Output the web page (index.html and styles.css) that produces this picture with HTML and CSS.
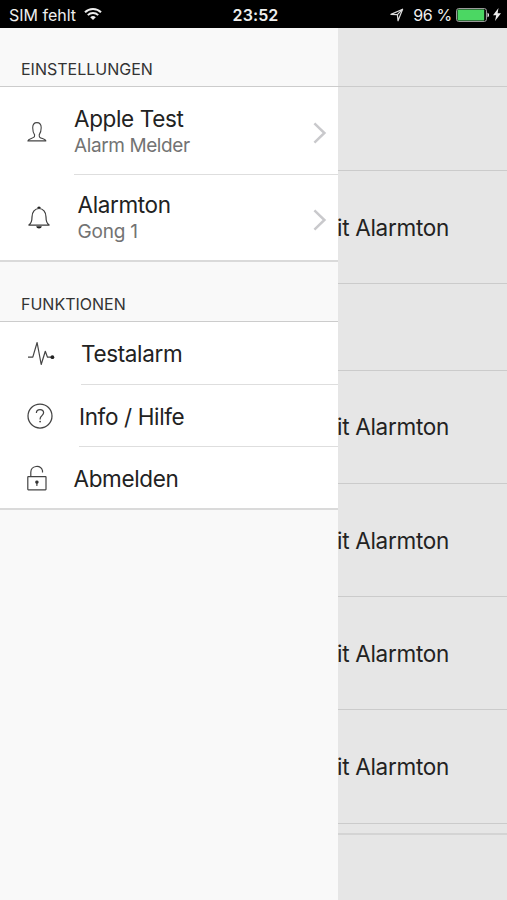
FILE: index.html
```html
<!DOCTYPE html>
<html lang="de">
<head>
<meta charset="utf-8">
<title>Einstellungen</title>
<link rel="stylesheet" href="styles.css">
</head>
<body>
<header class="status">
  <div class="status-left">
    <span class="carrier">SIM fehlt</span>
    <svg class="wifi" width="18" height="14" viewBox="0 0 18 14" fill="none" stroke="#eee" stroke-width="2"><path d="M1 5.2a11.3 11.3 0 0 1 16 0M3.8 8.1a7.4 7.4 0 0 1 10.4 0"/><path d="M9 13 6.2 10.3a4 4 0 0 1 5.6 0Z" fill="#eee" stroke="none"/></svg>
  </div>
  <time class="clock">23:52</time>
  <div class="status-right">
    <svg class="location" width="14" height="14" viewBox="0 0 14 14" fill="none" stroke="#ddd" stroke-width="1.2" stroke-linejoin="round"><path d="M1 6.4 12.6 1.2 8 12.8 7.4 6.6Z"/><path d="M7.4 6.6 12.6 1.2"/></svg>
    <span class="percent">96 %</span>
    <svg class="battery" width="34" height="14" viewBox="0 0 34 14"><rect x=".6" y=".6" width="29.8" height="12.8" rx="2" fill="none" stroke="#aaa" stroke-width="1"/><rect x="1.6" y="1.6" width="26.6" height="10.8" rx=".6" fill="#4bd763"/><path d="M31.5 4.7c2 .6 2 4 0 4.6Z" fill="#eee"/></svg>
    <svg class="bolt" width="8" height="13" viewBox="0 0 8 13"><path d="M5.5 0 0 7.2h3.2L2 13l6-7.8H4.6Z" fill="#eee"/></svg>
  </div>
</header>
<div class="screen">
  <nav class="drawer">
    <h2 class="heading first"><span>EINSTELLUNGEN</span></h2>
    <section class="group">
      <a class="row tall user">
        <svg class="icon" width="22" height="22" viewBox="0 0 22 22" fill="none" stroke="#444" stroke-width="1.1" stroke-linejoin="round"><path d="M8.6 13.9C7.2 11.9 6.7 9.9 6.7 6.8 6.7 3.6 8.4 1.6 10.9 1.6s4.3 2 4.3 5.2c0 3.1-.6 5.1-2 7.1 0 2.4.5 2.7 3.3 3.6 2.2.7 3.2 1.1 3.4 2.4H1.9c.2-1.3 1.2-1.8 3.4-2.5 2.8-.9 3.3-1.1 3.3-3.5Z"/></svg>
        <div class="cell"><div class="labels"><span class="title">Apple Test</span><span class="sub">Alarm Melder</span></div>
        <svg class="chevron" width="14" height="22" viewBox="0 0 14 22" fill="none" stroke="#c9c9cc" stroke-width="2.5"><path d="m1.4 1.4 10 9.6-10 9.6"/></svg></div>
      </a>
      <a class="row tall tone">
        <svg class="icon" width="24" height="24" viewBox="0 0 24 24" fill="none" stroke="#3d3d3d" stroke-width="1.2" stroke-linejoin="round"><path d="M1 18.7c2.5-1.6 3-4 3-7.8 0-5 2.9-8.4 7-8.4s7 3.4 7 8.4c0 3.8.5 6.2 3 7.8v.5H1Z"/><path d="M9.2 2.3a1.8 1.8 0 0 1 3.6 0ZM8.2 20.2h5.6c-.5 3-5.1 3-5.6 0Z" fill="#222" stroke="none"/></svg>
        <div class="cell"><div class="labels"><span class="title">Alarmton</span><span class="sub">Gong 1</span></div>
        <svg class="chevron" width="14" height="22" viewBox="0 0 14 22" fill="none" stroke="#c9c9cc" stroke-width="2.5"><path d="m1.4 1.4 10 9.6-10 9.6"/></svg></div>
      </a>
    </section>
    <h2 class="heading second"><span>FUNKTIONEN</span></h2>
    <section class="group">
      <a class="row short test">
        <svg class="icon" width="28" height="25" viewBox="0 0 28 25" fill="none" stroke="#444" stroke-width="1.2" stroke-linejoin="round"><path d="M0 16.2h4.8L9.1 1.5l4.1 22 4.1-13.2 2.2 5.9h5"/><circle cx="24.4" cy="16.2" r="1.9" fill="#222" stroke="none"/></svg>
        <div class="cell"><span class="title">Testalarm</span></div>
      </a>
      <a class="row short info">
        <svg class="icon" width="26" height="26" viewBox="0 0 26 26" fill="none" stroke="#444" stroke-width="1.25"><circle cx="13" cy="13" r="12"/><path d="M9.4 10c0-2.3 1.5-3.5 3.6-3.5s3.6 1.3 3.6 3.3c0 2.7-3.5 3-3.5 6.1v.5"/><circle cx="13.1" cy="18.6" r=".9" fill="#444" stroke="none"/></svg>
        <div class="cell"><span class="title">Info / Hilfe</span></div>
      </a>
      <a class="row short logout">
        <svg class="icon" width="20" height="26" viewBox="0 0 20 26" fill="none" stroke="#444" stroke-width="1.2"><rect x=".8" y="11.6" width="18.2" height="13.2" rx=".5"/><path d="M3.8 11.6V7.2a6 6 0 0 1 11.7-1.6v1.9"/><path d="M9.9 15.4a1.7 1.7 0 0 1 .6 3.3l-.1 2.3h-1l-.1-2.3a1.7 1.7 0 0 1 .6-3.3Z" fill="#333" stroke="none"/></svg>
        <div class="cell"><span class="title">Abmelden</span></div>
      </a>
    </section>
  </nav>
  <main class="list">
    <div class="item top"></div>
    <div class="item second-item"></div>
    <div class="item alarm"><span>it Alarmton</span></div>
    <div class="item space"></div>
    <div class="item alarm"><span>it Alarmton</span></div>
    <div class="item alarm"><span>it Alarmton</span></div>
    <div class="item alarm"><span>it Alarmton</span></div>
    <div class="item alarm"><span>it Alarmton</span></div>
    <div class="item gap"></div>
  </main>
</div>
</body>
</html>
```
FILE: styles.css
```css
* { box-sizing: border-box; }
body {
  margin: 0;
  width: 507px;
  height: 900px;
  overflow: hidden;
  background: #e6e6e6;
  color: #222;
  font-family: Inter, "Liberation Sans", sans-serif;
}
svg { display: block; flex: none; }
.status {
  display: grid;
  grid-template-columns: 1fr auto 1fr;
  align-items: center;
  height: 28px;
  padding: 2px 6px 0 9px;
  background: #000;
  color: #eee;
  font-size: 16px;
  line-height: 24px;
}
.status-left, .status-right { display: flex; align-items: center; }
.status-left { gap: 8px; }
.wifi { margin-bottom: 2px; }
.status-right { justify-content: flex-end; }
.clock { font-weight: 600; padding-left: 1px; letter-spacing: .1px; }
.location { margin: 0 9px 1px 0; }
.percent { margin-right: 4px; letter-spacing: -.3px; }
.battery { margin-bottom: 1px; }
.bolt { margin: 0 0 2px 3px; }
.screen { display: flex; height: 872px; }
.drawer { width: 338px; flex: none; background: #f9f9f9; }
.heading {
  display: flex;
  align-items: flex-end;
  margin: 0;
  padding: 0 21px 7px;
  border-bottom: 1px solid #ccc;
  font-size: 16px;
  font-weight: 400;
  line-height: 20px;
  color: #333;
}
.first { height: 59px; }
.second { height: 60px; }
.group { background: #fff; border-bottom: 2px solid #dadada; }
.row { display: flex; align-items: center; height: 62px; }
.cell {
  display: flex;
  flex: 1;
  align-items: center;
  justify-content: space-between;
  height: 100%;
  padding-right: 11px;
  border-bottom: 1px solid #dedede;
}
.row:last-child .cell { border-bottom: 0; }
.labels { display: flex; flex-direction: column; padding-top: 1px; }
.title { font-size: 22.5px; line-height: 28px; letter-spacing: -.36px; white-space: nowrap; }
.sub { font-size: 19px; line-height: 26px; color: #737373; letter-spacing: -.4px; }
.chevron { margin-top: 4px; }
.short .cell { padding-top: 2px; }
.user { height: 88px; padding-left: 26px; }
.user .icon { margin: 2px 26px 0 0; }
.user .labels { padding-top: 2px; }
.tone { height: 85px; padding-left: 28px; }
.tone .icon { margin-right: 25.5px; }
.tone .sub { letter-spacing: -.2px; }
.test { height: 63px; padding-left: 28px; }
.test .icon { margin-right: 25px; }
.info { padding-left: 27px; }
.info .icon { margin-right: 26px; }
.logout { height: 61px; padding-left: 27px; }
.logout .icon { margin-right: 26.5px; }
.list { flex: 1; min-width: 0; }
.item { border-bottom: 1px solid #cbcbcb; }
.top { height: 59px; }
.second-item { height: 84px; }
.alarm {
  display: flex;
  align-items: center;
  height: 113.3px;
  font-size: 22.5px;
  letter-spacing: -.3px;
  white-space: nowrap;
}
.alarm span { margin-left: -1px; }
.space { height: 86.3px; }
.gap { height: 11px; border-bottom-width: 2px; border-color: #d4d4d4; }
```
